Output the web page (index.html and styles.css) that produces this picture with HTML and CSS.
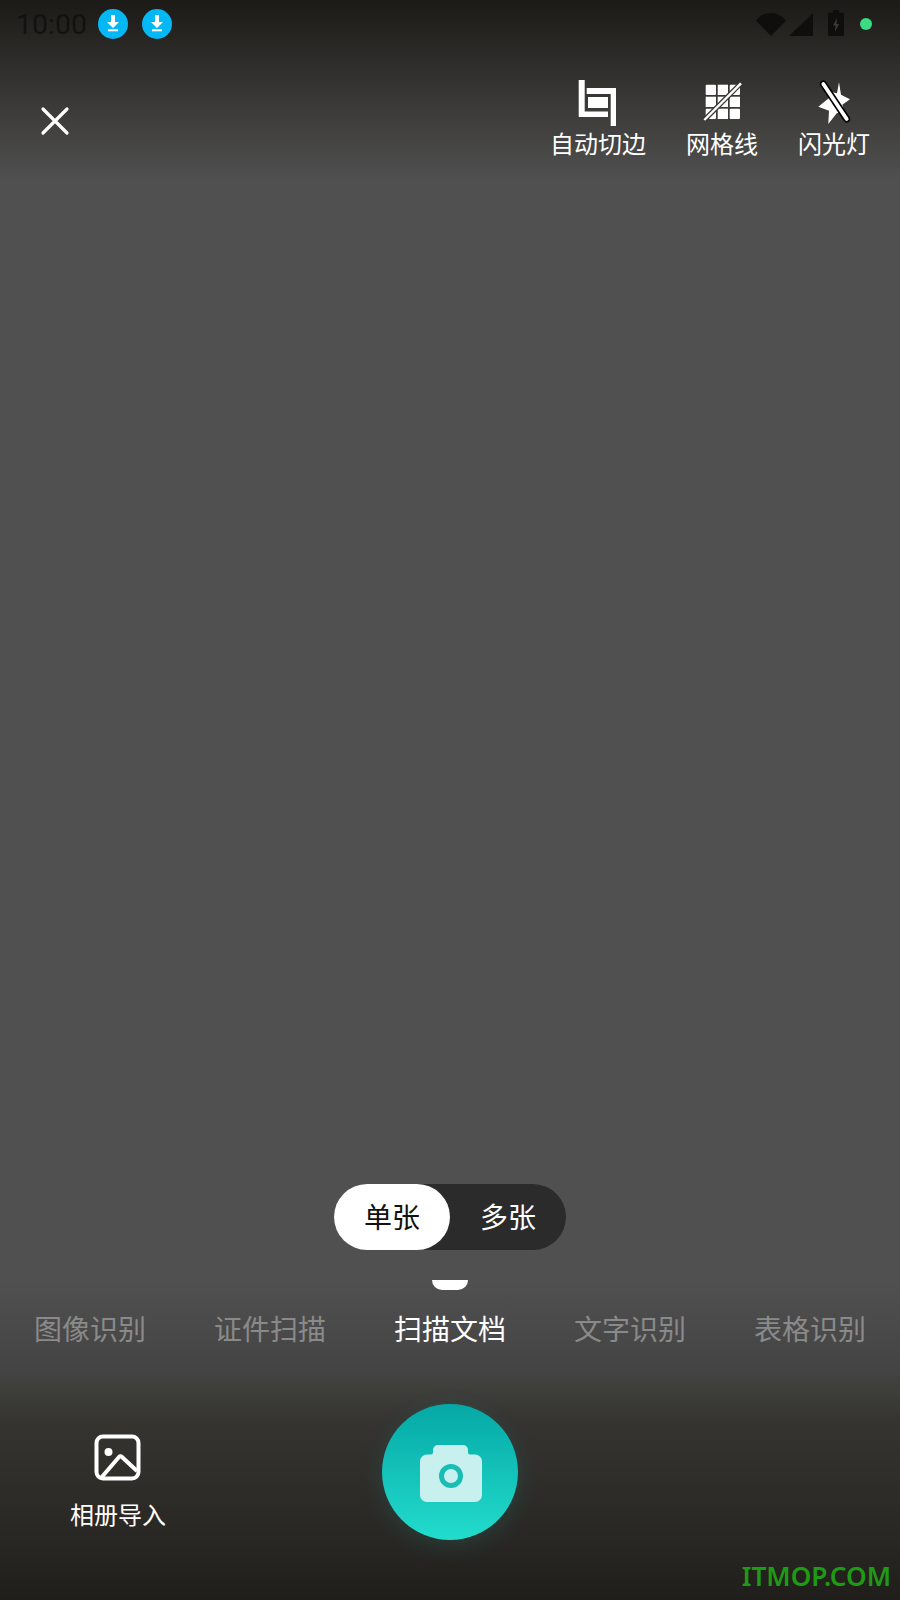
FILE: index.html
```html
<!DOCTYPE html>
<html lang="zh">
<head>
<meta charset="utf-8">
<title>扫描文档</title>
<link rel="stylesheet" href="styles.css">
</head>
<body>
<div class="screen">
  <header class="top">
    <div class="status">
      <div class="status-left">
        <span class="time">10:00</span>
        <svg class="dl" viewBox="0 0 30 30"><circle cx="15" cy="15" r="15" fill="#04b7f5"/><path d="M13 6h4v7h4l-6 6-6-6h4z" fill="#fff"/><rect x="10" y="20.300" width="10" height="2" fill="#fff"/></svg>
        <svg class="dl" viewBox="0 0 30 30"><circle cx="15" cy="15" r="15" fill="#04b7f5"/><path d="M13 6h4v7h4l-6 6-6-6h4z" fill="#fff"/><rect x="10" y="20.300" width="10" height="2" fill="#fff"/></svg>
      </div>
      <div class="status-right">
        <svg class="wifi" viewBox="0 0 30 23"><path d="M0 7.500C4 2.500 9 0 15 0s11 2.500 15 7.500L15 23z" fill="#0f0e0c"/></svg>
        <svg class="signal" viewBox="0 0 24 23"><path d="M24 0v23H0z" fill="#0f0e0c"/></svg>
        <svg class="battery" viewBox="0 0 16 26"><path d="M5 0h6v2.500h3.500a1.500 1.500 0 0 1 1.500 1.500v20.500a1.500 1.500 0 0 1-1.500 1.500h-13A1.500 1.500 0 0 1 0 24.500V4a1.500 1.500 0 0 1 1.500-1.500H5z" fill="#0f0e0c"/><path d="M9 8l-4 7.500h2.500L7 22l4-8H8.500z" fill="#3a3936"/></svg>
        <span class="dot"></span>
      </div>
    </div>
    <div class="toolbar">
      <svg class="close" viewBox="0 0 30 30"><path d="M3 3l24 24M27 3L3 27" stroke="#fff" stroke-width="3.200" stroke-linecap="round" fill="none"/></svg>
      <div class="tools">
        <div class="tool tool-crop">
          <svg class="tool-icon" viewBox="0 0 38 46"><path d="M.7 0h6v31.500H30V37H.7z" fill="#fff"/><path d="M8.700 8H38v38h-5.300V14H8.700z" fill="#fff"/><rect x="10" y="17" width="20" height="11" fill="#fff"/></svg>
          <span>自动切边</span>
        </div>
        <div class="tool tool-grid">
          <svg class="tool-icon" viewBox="0 0 40 40"><rect x="2.700" y="2.700" width="10.300" height="10.300" rx="1" fill="#fff"/><rect x="14.700" y="2.700" width="10.300" height="10.300" fill="#fff"/><rect x="26.700" y="2.700" width="10.300" height="10.300" rx="1" fill="#fff"/><rect x="2.700" y="14.700" width="10.300" height="10.300" fill="#fff"/><rect x="14.700" y="14.700" width="10.300" height="10.300" fill="#fff"/><rect x="26.700" y="14.700" width="10.300" height="10.300" fill="#fff"/><rect x="2.700" y="26.700" width="10.300" height="10.300" rx="1" fill="#fff"/><rect x="14.700" y="26.700" width="10.300" height="10.300" fill="#fff"/><rect x="26.700" y="26.700" width="10.300" height="10.300" rx="1" fill="#fff"/><path d="M1.300 38L38 1.300" stroke="#3c3b3a" stroke-width="5" fill="none"/><path d="M1.300 38L38 1.300" stroke="#fff" stroke-width="2.400" fill="none"/></svg>
          <span>网格线</span>
        </div>
        <div class="tool tool-flash">
          <svg class="tool-icon" viewBox="0 0 40 46"><path d="M24 2.300l2 12.400 9 4.600-7.700 5.400 2 6.600-7.600 2L13.300 44l.7-13.300-10.700-4L14 18l3.300-5.700 4.700 1z" fill="#fff"/><path d="M8.300 4l23.400 35" stroke="#000" stroke-width="7" stroke-linecap="round"/><path d="M8.300 4l23.400 35" stroke="#fff" stroke-width="3.800" stroke-linecap="round"/></svg>
          <span>闪光灯</span>
        </div>
      </div>
    </div>
  </header>
  <main class="viewfinder"></main>
  <section class="modes">
    <div class="segment">
      <span class="seg seg-on">单张</span>
      <span class="seg">多张</span>
    </div>
    <div class="marker"></div>
    <nav class="tabs">
      <span class="tab">图像识别</span>
      <span class="tab">证件扫描</span>
      <span class="tab tab-on">扫描文档</span>
      <span class="tab">文字识别</span>
      <span class="tab">表格识别</span>
    </nav>
  </section>
  <footer class="bottom">
    <div class="album">
      <svg class="album-icon" viewBox="0 0 48 48"><rect x="2.500" y="2.500" width="42" height="42" rx="6.500" fill="none" stroke="#fff" stroke-width="4"/><circle cx="14.500" cy="18" r="4" fill="#fff"/><path d="M7 44L25 23a2 2 0 0 1 3 0l15 14" fill="none" stroke="#fff" stroke-width="4"/></svg>
      <span>相册导入</span>
    </div>
    <div class="shutter">
      <svg class="cam" viewBox="0 0 62 57"><path d="M7 9.500h4a2 2 0 0 0 2-2V5a5 5 0 0 1 5-5h25a5 5 0 0 1 5 5v2.500a2 2 0 0 0 2 2h5a7 7 0 0 1 7 7V50a7 7 0 0 1-7 7H7a7 7 0 0 1-7-7V16.500a7 7 0 0 1 7-7z" fill="#c8f0ee"/><circle cx="31" cy="31" r="9.500" fill="none" stroke="#18bdb5" stroke-width="5"/></svg>
    </div>
  </footer>
  <div class="watermark">ITMOP.COM</div>
</div>
</body>
</html>
```
FILE: styles.css
```css
* { box-sizing: border-box; }
html, body { margin: 0; padding: 0; }
body { font-family: "Noto Sans CJK SC", "Noto Sans", sans-serif; color: #fff; }
.screen {
  position: relative;
  width: 900px;
  height: 1600px;
  display: flex;
  flex-direction: column;
  overflow: hidden;
  background: linear-gradient(180deg, #1c1a16 0, #505050 180px, #505050 1280px, #444 1370px, #3e3e3b 1390px, #353431 1420px, #292724 1540px, #201e1b 1600px);
}
.status { height: 48px; display: flex; justify-content: space-between; align-items: center; padding: 0 28px 0 16px; }
.status-left { display: flex; align-items: center; gap: 14px; }
.time { font-family: Roboto, sans-serif; font-size: 28.500px; color: #121210; margin-right: -3px; margin-top: 3px; line-height: 1; }
.dl { width: 30px; height: 30px; display: block; }
.status-right { display: flex; align-items: center; }
.wifi { width: 30px; height: 23px; margin-right: 3px; }
.signal { width: 24px; height: 23px; margin-right: 15px; }
.battery { width: 16px; height: 26px; margin-right: 16px; margin-top: -3px; }
.dot { width: 12px; height: 12px; border-radius: 50%; background: #3adb84; }
.toolbar { height: 120px; display: flex; justify-content: space-between; padding: 32px 30px 0 40px; }
.close { width: 30px; height: 30px; margin-top: 26px; display: block; }
.tools { display: flex; gap: 40px; }
.tool { display: flex; flex-direction: column; align-items: center; font-size: 24px; line-height: 34px; }
.tool-icon { display: block; }
.tool-crop .tool-icon { width: 38px; height: 46px; margin-right: 3px; }
.tool-grid .tool-icon { width: 40px; height: 40px; margin: 2px 0 4px 2px; }
.tool-flash .tool-icon { width: 40px; height: 46px; margin-left: 2px; }
.viewfinder { flex: 1; }
.modes { display: flex; flex-direction: column; align-items: center; }
.segment { width: 232px; height: 66px; border-radius: 33px; background: #2b2b2b; display: flex; }
.seg { width: 116px; height: 66px; padding-bottom: 2px; display: flex; align-items: center; justify-content: center; border-radius: 33px; font-size: 28px; }
.seg-on { background: #fff; color: #111; }
.marker { width: 36px; height: 10px; margin-top: 30px; background: #fff; border-radius: 0 0 10px 10px; }
.tabs { width: 900px; display: grid; grid-template-columns: repeat(5, 180px); margin-top: 18px; margin-bottom: 2px; }
.tab { text-align: center; font-size: 28px; line-height: 40px; color: #8a8a8a; }
.tab-on { color: #fff; }
.bottom { height: 250px; display: flex; align-items: flex-start; padding-top: 54px; }
.album { width: 96px; margin-left: 70px; margin-top: 30px; display: flex; flex-direction: column; align-items: center; font-size: 24px; line-height: 36px; }
.album-icon { width: 48px; height: 48px; display: block; margin-bottom: 14px; }
.shutter { width: 136px; height: 136px; border-radius: 50%; margin-left: 216px; background: linear-gradient(180deg, #05a8a6, #22dccc); box-shadow: 0 6px 24px rgba(34, 220, 204, 0.12); display: flex; align-items: center; justify-content: center; }
.cam { width: 62px; height: 57px; display: block; margin: 3px 0 0 2px; }
.watermark { position: absolute; right: 9px; top: 1556px; font-family: "Noto Sans", sans-serif; font-weight: 600; font-size: 26.200px; line-height: 40px; color: #1f9a14; }
```
